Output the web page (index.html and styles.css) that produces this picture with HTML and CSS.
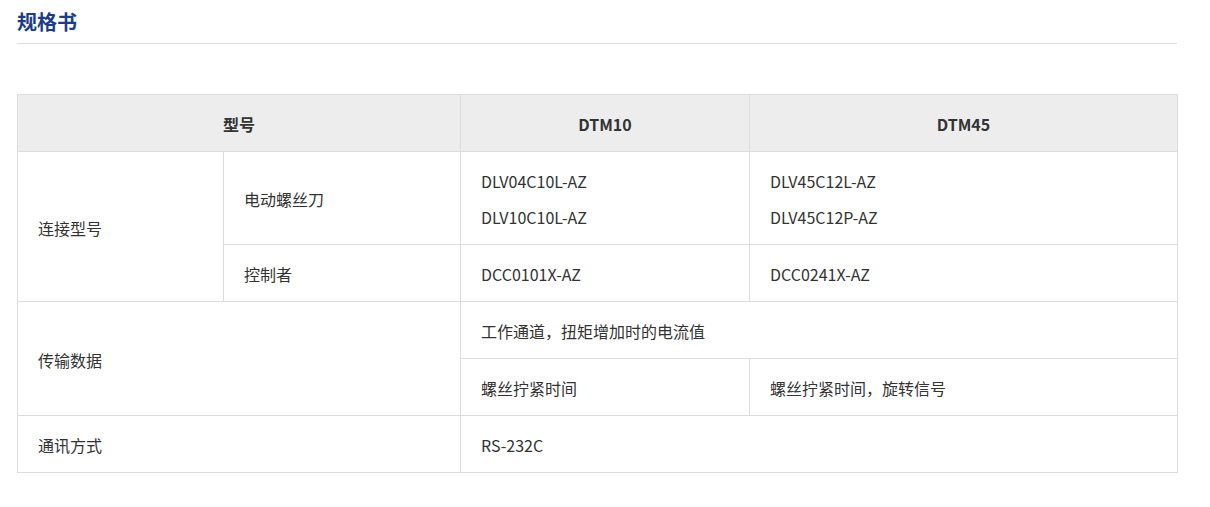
FILE: index.html
```html
<!DOCTYPE html>
<html lang="zh-CN">
<head>
<meta charset="utf-8">
<title>规格书</title>
<link rel="stylesheet" href="styles.css">
</head>
<body>
<div class="page">
  <h2 class="title">规格书</h2>
  <table class="spec">
    <colgroup>
      <col class="c1"><col class="c2"><col class="c3"><col class="c4">
    </colgroup>
    <thead>
      <tr>
        <th colspan="2">型号</th>
        <th>DTM10</th>
        <th>DTM45</th>
      </tr>
    </thead>
    <tbody>
      <tr>
        <td rowspan="2">连接型号</td>
        <td>电动螺丝刀</td>
        <td>DLV04C10L-AZ<br>DLV10C10L-AZ</td>
        <td>DLV45C12L-AZ<br>DLV45C12P-AZ</td>
      </tr>
      <tr>
        <td>控制者</td>
        <td>DCC0101X-AZ</td>
        <td>DCC0241X-AZ</td>
      </tr>
      <tr>
        <td colspan="2" rowspan="2">传输数据</td>
        <td colspan="2">工作通道，扭矩增加时的电流值</td>
      </tr>
      <tr>
        <td>螺丝拧紧时间</td>
        <td>螺丝拧紧时间，旋转信号</td>
      </tr>
      <tr>
        <td colspan="2">通讯方式</td>
        <td colspan="2">RS-232C</td>
      </tr>
    </tbody>
  </table>
</div>
</body>
</html>
```

FILE: styles.css
```css
html, body {
  margin: 0;
  padding: 0;
  background: #fff;
}
body {
  font-family: "Noto Sans CJK SC", "Noto Sans", sans-serif;
  color: #333;
}
.page {
  width: 1160px;
  padding: 8px 0 0 17px;
}
.title {
  margin: 0;
  font-size: 20px;
  line-height: 28px;
  font-weight: 700;
  color: #1b3d8f;
  padding-bottom: 7px;
  border-bottom: 1px solid #dddddd;
}
.spec {
  margin-top: 50px;
  width: 1160px;
  border-collapse: collapse;
  table-layout: fixed;
  font-size: 16px;
  line-height: 36px;
}
.c1 { width: 206px; }
.c2 { width: 237px; }
.c3 { width: 289px; }
.c4 { width: 428px; }
.spec th, .spec td {
  border: 1px solid #dddddd;
  padding: 11px 20px 9px;
  vertical-align: middle;
  text-align: left;
  font-weight: 400;
}
.spec th {
  background: #ededed;
  text-align: center;
  font-weight: 700;
}
```
